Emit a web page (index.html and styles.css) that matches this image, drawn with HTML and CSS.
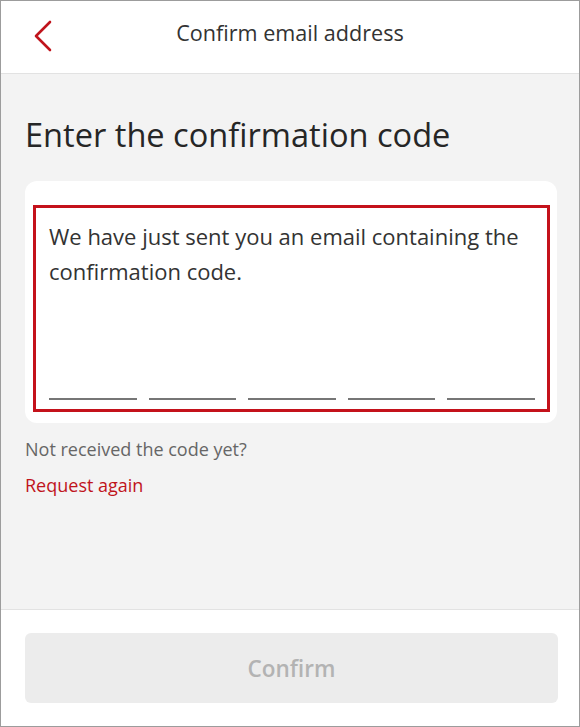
FILE: index.html
```html
<!DOCTYPE html>
<html lang="en">
<head>
<meta charset="utf-8">
<title>Confirm email address</title>
<link rel="stylesheet" href="styles.css">
</head>
<body>
<div class="screen">
  <header class="header">
    <button class="back" aria-label="Back">
      <svg width="20" height="32" viewBox="0 0 20 32"><path d="M17 2 L3 16 L17 30" fill="none" stroke="#c0141c" stroke-width="2.6" stroke-linecap="round" stroke-linejoin="round"/></svg>
    </button>
    <h1 class="title">Confirm email address</h1>
    <span></span>
  </header>
  <main class="content">
    <h2 class="heading">Enter the confirmation code</h2>
    <div class="card">
      <div class="code-box">
        <p class="message">We have just sent you an email containing the confirmation code.</p>
        <div class="digits">
          <span class="digit"></span>
          <span class="digit"></span>
          <span class="digit"></span>
          <span class="digit"></span>
          <span class="digit"></span>
        </div>
      </div>
    </div>
    <p class="hint">Not received the code yet?</p>
    <a class="link" href="#">Request again</a>
  </main>
  <footer class="footer">
    <button class="confirm" disabled>Confirm</button>
  </footer>
</div>
</body>
</html>
```
FILE: styles.css
```css
* { box-sizing: border-box; }
html, body { margin: 0; padding: 0; }
body { font-family: "Open Sans", "Noto Sans", sans-serif; color: #333; }
.screen {
  width: 580px;
  height: 727px;
  border: 1px solid #9c9c9c;
  background: #f3f3f3;
  display: flex;
  flex-direction: column;
}
.header {
  height: 73px;
  flex: none;
  background: #fff;
  border-bottom: 1px solid #e2e2e2;
  display: grid;
  grid-template-columns: 1fr auto 1fr;
  align-items: center;
}
.back {
  justify-self: start;
  margin-left: 32px;
  padding: 0;
  border: 0;
  background: none;
  display: flex;
  margin-top: -2px;
}
.title {
  margin: 0;
  font-weight: 400;
  font-size: 21.6px;
  color: #333;
  margin-top: -10px;
}
.content {
  flex: 1;
  padding: 40px 22px 0 24px;
  display: flex;
  flex-direction: column;
  align-items: flex-start;
}
.heading {
  margin: 0;
  font-weight: 400;
  font-size: 32.6px;
  line-height: 42px;
  color: #262626;
}
.card {
  align-self: stretch;
  margin-top: 25px;
  background: #fff;
  border-radius: 12px;
  padding: 24px 7px 11px 8px;
}
.code-box {
  border: 3px solid #c4121b;
  padding: 11px 12px 9px 13px;
  display: flex;
  flex-direction: column;
}
.message {
  margin: 0;
  font-size: 22px;
  line-height: 35px;
  color: #333;
  min-height: 179px;
}
.digits {
  display: flex;
  gap: 12px;
}
.digit {
  flex: 1;
  height: 2px;
  background: #767676;
}
.hint {
  margin: 14px 0 0;
  font-size: 18px;
  line-height: 24px;
  color: #666;
}
.link {
  margin-top: 12px;
  font-size: 18px;
  line-height: 24px;
  color: #c0141c;
  text-decoration: none;
}
.footer {
  flex: none;
  height: 117px;
  background: #fff;
  border-top: 1px solid #e2e2e2;
  padding: 23px 21px 0 24px;
}
.confirm {
  width: 100%;
  height: 70px;
  border: 0;
  border-radius: 6px;
  background: #ececec;
  color: #b3b3b3;
  font-family: inherit;
  font-size: 22.5px;
  font-weight: 600;
}
```
